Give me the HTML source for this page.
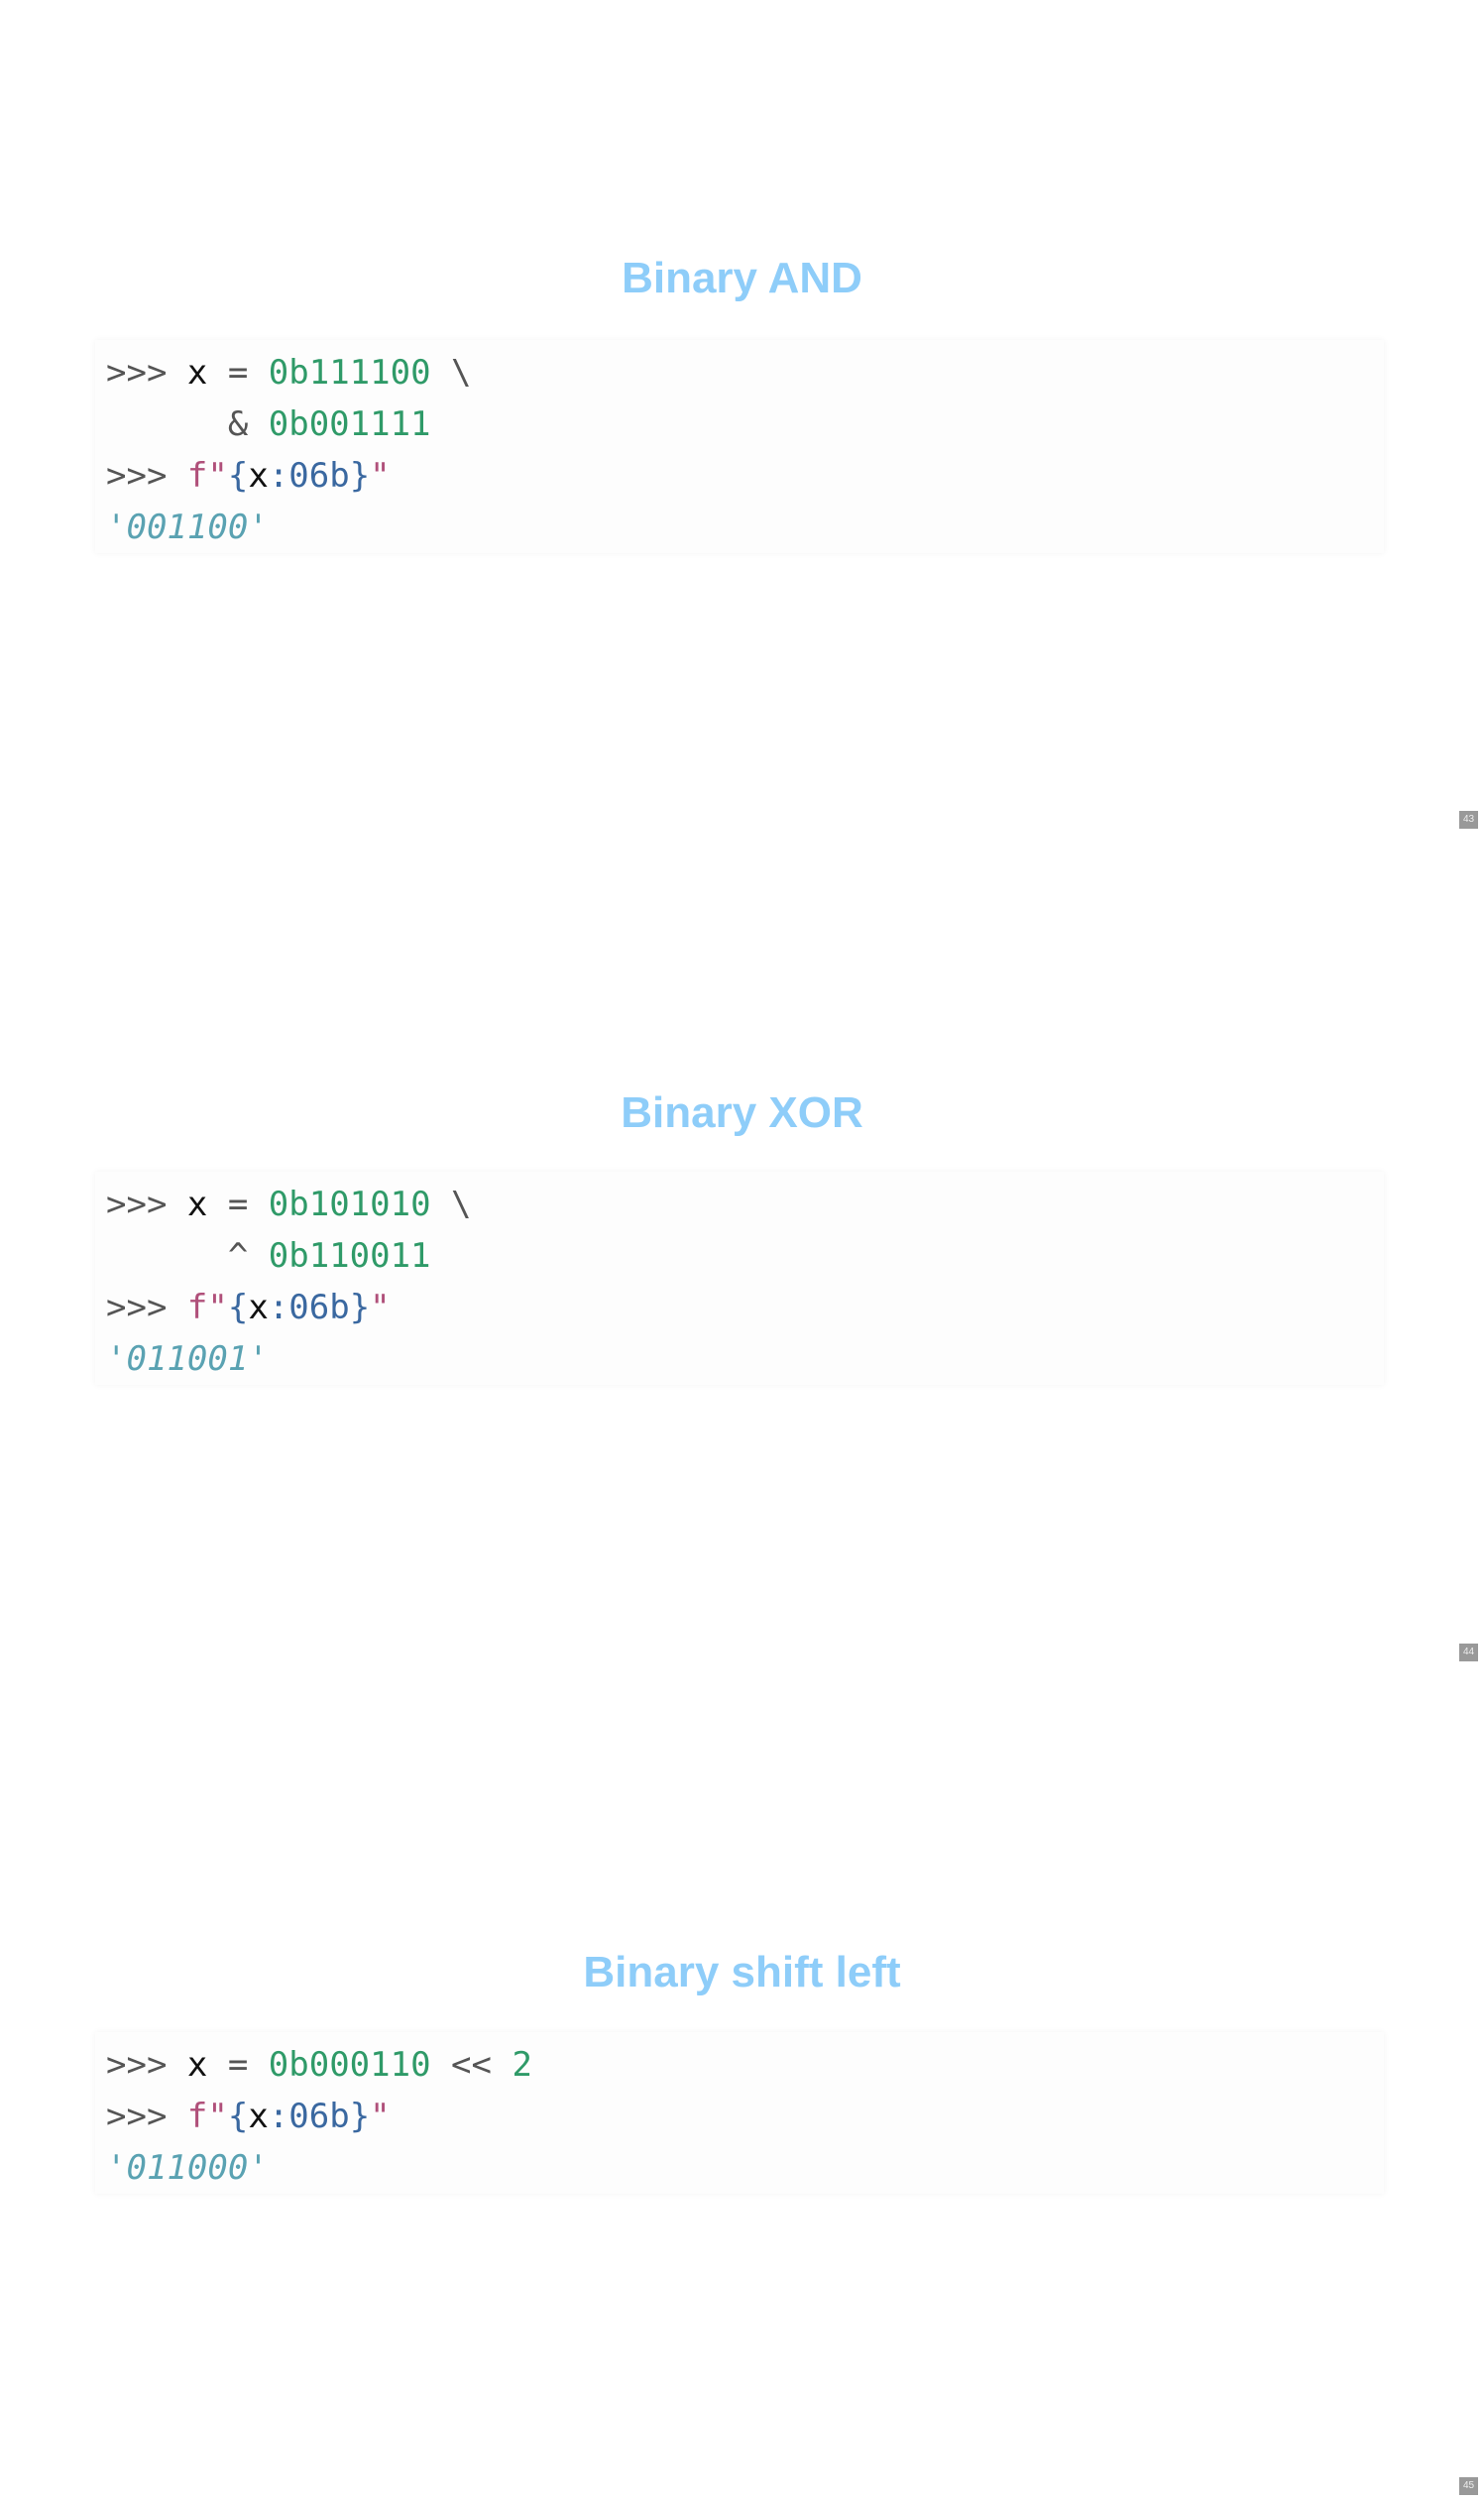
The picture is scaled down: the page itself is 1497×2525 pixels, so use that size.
<!DOCTYPE html>
<html><head><meta charset="utf-8"><style>
html,body{margin:0;padding:0;background:#fff;}
body{width:1497px;height:2525px;position:relative;overflow:hidden;}
h1{position:absolute;left:0;width:1497px;text-align:center;margin:0;font:bold 44px/1 "Liberation Sans",sans-serif;color:#8ecdf9;}
.box{position:absolute;left:96px;width:1300px;background:#fdfdfd;box-shadow:0 0 6px rgba(0,0,0,0.05);}
.l{position:absolute;left:11px;font:34px/1 "DejaVu Sans Mono","Liberation Mono",monospace;white-space:pre;color:#555;}
.k{color:#111}.g{color:#2f9a68}.p{color:#b0507a}.b{color:#3a68a0}.o{color:#5aa2b2;font-style:italic}
.pg{position:absolute;left:1472px;width:19px;height:18px;background:#999;color:#eee;font:10px/18px "Liberation Sans",sans-serif;text-align:center;}
</style></head><body>

<h1 style="top:259px">Binary AND</h1>
<div class="box" style="top:343px;height:215px">
<div class="l" style="top:16px">&gt;&gt;&gt; <span class="k">x</span> = <span class="g">0b111100</span> \</div>
<div class="l" style="top:68px">      &amp; <span class="g">0b001111</span></div>
<div class="l" style="top:120px">&gt;&gt;&gt; <span class="p">f"</span><span class="b">{</span><span class="k">x</span><span class="b">:06b}</span><span class="p">"</span></div>
<div class="l o" style="top:172px">'001100'</div>
</div>
<div class="pg" style="top:818px">43</div>

<h1 style="top:1101px">Binary XOR</h1>
<div class="box" style="top:1182px;height:215px">
<div class="l" style="top:16px">&gt;&gt;&gt; <span class="k">x</span> = <span class="g">0b101010</span> \</div>
<div class="l" style="top:68px">      ^ <span class="g">0b110011</span></div>
<div class="l" style="top:120px">&gt;&gt;&gt; <span class="p">f"</span><span class="b">{</span><span class="k">x</span><span class="b">:06b}</span><span class="p">"</span></div>
<div class="l o" style="top:172px">'011001'</div>
</div>
<div class="pg" style="top:1658px">44</div>

<h1 style="top:1968px">Binary shift left</h1>
<div class="box" style="top:2050px;height:163px">
<div class="l" style="top:16px">&gt;&gt;&gt; <span class="k">x</span> = <span class="g">0b000110</span> &lt;&lt; <span class="g">2</span></div>
<div class="l" style="top:68px">&gt;&gt;&gt; <span class="p">f"</span><span class="b">{</span><span class="k">x</span><span class="b">:06b}</span><span class="p">"</span></div>
<div class="l o" style="top:120px">'011000'</div>
</div>
<div class="pg" style="top:2499px">45</div>

</body></html>
